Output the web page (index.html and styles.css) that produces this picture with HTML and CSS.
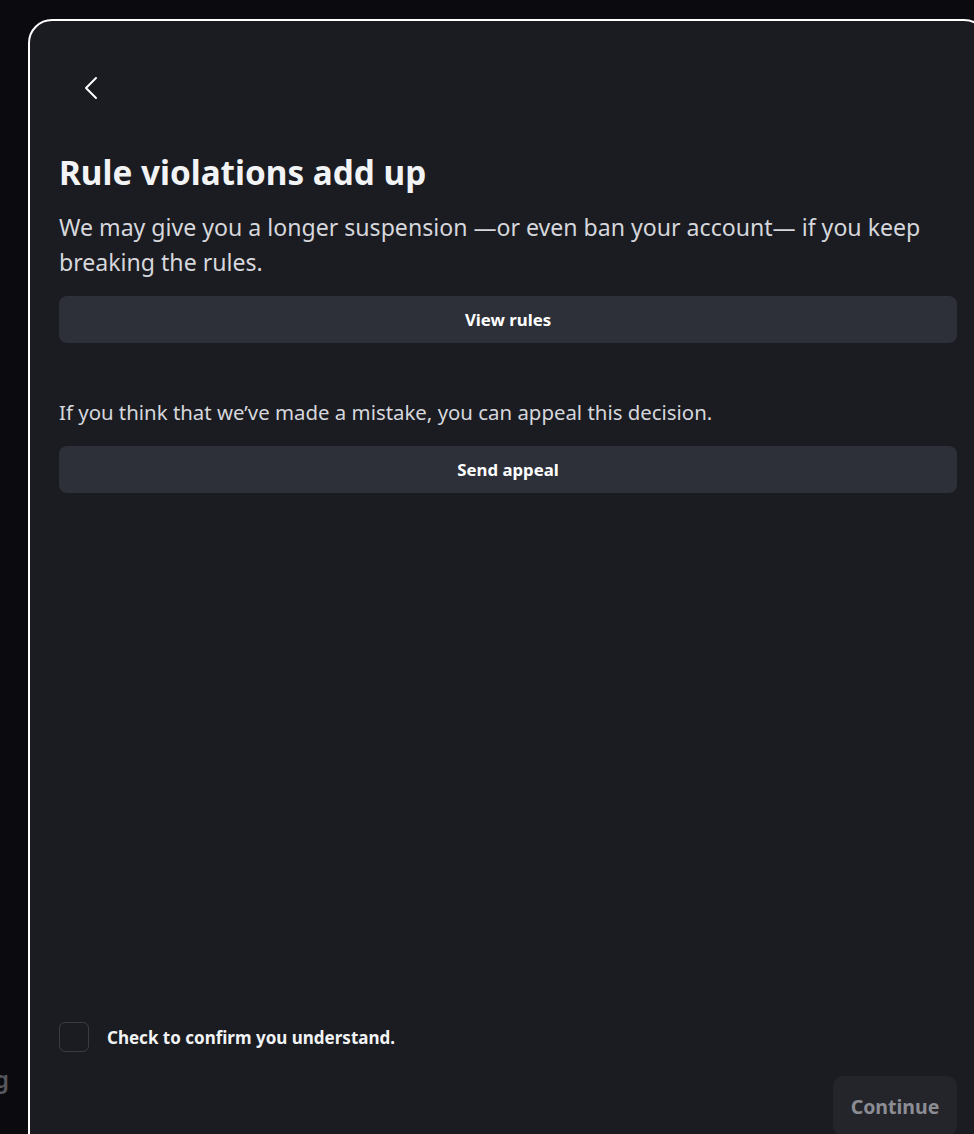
FILE: index.html
```html
<!DOCTYPE html>
<html lang="en">
<head>
<meta charset="utf-8">
<title>Rule violations add up</title>
<link rel="stylesheet" href="styles.css">
</head>
<body>
<div class="backdrop-text">g</div>
<div class="modal">
  <div class="header">
    <button class="back" aria-label="Back">
      <svg width="24" height="24" viewBox="0 0 24 24" fill="none"><path d="M17 2 L7 12 L17 22" stroke="#fff" stroke-width="2" stroke-linecap="round" stroke-linejoin="round"/></svg>
    </button>
  </div>
  <h1 class="title">Rule violations add up</h1>
  <p class="lead">We may give you a longer suspension —or even ban your account— if you keep breaking the rules.</p>
  <button class="wide-btn">View rules</button>
  <p class="note">If you think that we’ve made a mistake, you can appeal this decision.</p>
  <button class="wide-btn">Send appeal</button>
  <div class="spacer"></div>
  <label class="confirm">
    <span class="box"></span>
    <span class="confirm-text">Check to confirm you understand.</span>
  </label>
  <div class="footer">
    <button class="continue" disabled>Continue</button>
  </div>
</div>
</body>
</html>
```

FILE: styles.css
```css
html, body {
  margin: 0;
  padding: 0;
  height: 100%;
}
body {
  background: #0b0b0f;
  overflow: hidden;
  font-family: "Noto Sans", "Open Sans", sans-serif;
  position: relative;
}
.backdrop-text {
  position: absolute;
  left: -6px;
  top: 1062px;
  font-size: 24px;
  font-weight: 600;
  color: #56575d;
}
.modal {
  position: relative;
  box-sizing: border-box;
  margin: 19px 0 0 28px;
  width: 960px;
  height: 1160px;
  border: 2px solid #ffffff;
  border-radius: 24px;
  background: #1b1c21;
  padding: 47px 29px 0 29px;
  display: flex;
  flex-direction: column;
}
.header {
  display: flex;
  height: 40px;
}
.back {
  width: 40px;
  height: 40px;
  margin-left: 12px;
  padding: 0;
  border: 0;
  background: transparent;
  display: flex;
  align-items: center;
  justify-content: center;
}
.title {
  margin: 44px 0 0;
  font-size: 33.3px;
  line-height: 40px;
  font-weight: 700;
  color: #f2f3f5;
}
.lead {
  margin: 18px 0 0;
  font-size: 23.1px;
  line-height: 35px;
  color: #d6d7dc;
}
.wide-btn {
  margin-top: 16px;
  height: 47px;
  border: 0;
  border-radius: 8px;
  background: #2e3039;
  color: #ffffff;
  font-family: inherit;
  font-size: 16.8px;
  font-weight: 700;
}
.note {
  margin: 54px 0 0;
  font-size: 20.4px;
  line-height: 30px;
  color: #d6d7dc;
}
.note + .wide-btn {
  margin-top: 19px;
}
.spacer {
  flex: 0 0 529px;
}
.confirm {
  display: flex;
  align-items: center;
  gap: 18px;
}
.box {
  box-sizing: border-box;
  width: 30px;
  height: 30px;
  border: 1px solid #3b3c43;
  border-radius: 6px;
}
.confirm-text {
  font-size: 17px;
  font-weight: 700;
  color: #f2f3f5;
}
.footer {
  display: flex;
  justify-content: flex-end;
  margin-top: 24px;
}
.continue {
  width: 124px;
  height: 60px;
  border: 0;
  border-radius: 10px;
  background: #24252b;
  color: #8c8d94;
  font-family: inherit;
  font-size: 19.5px;
  font-weight: 700;
}
```
